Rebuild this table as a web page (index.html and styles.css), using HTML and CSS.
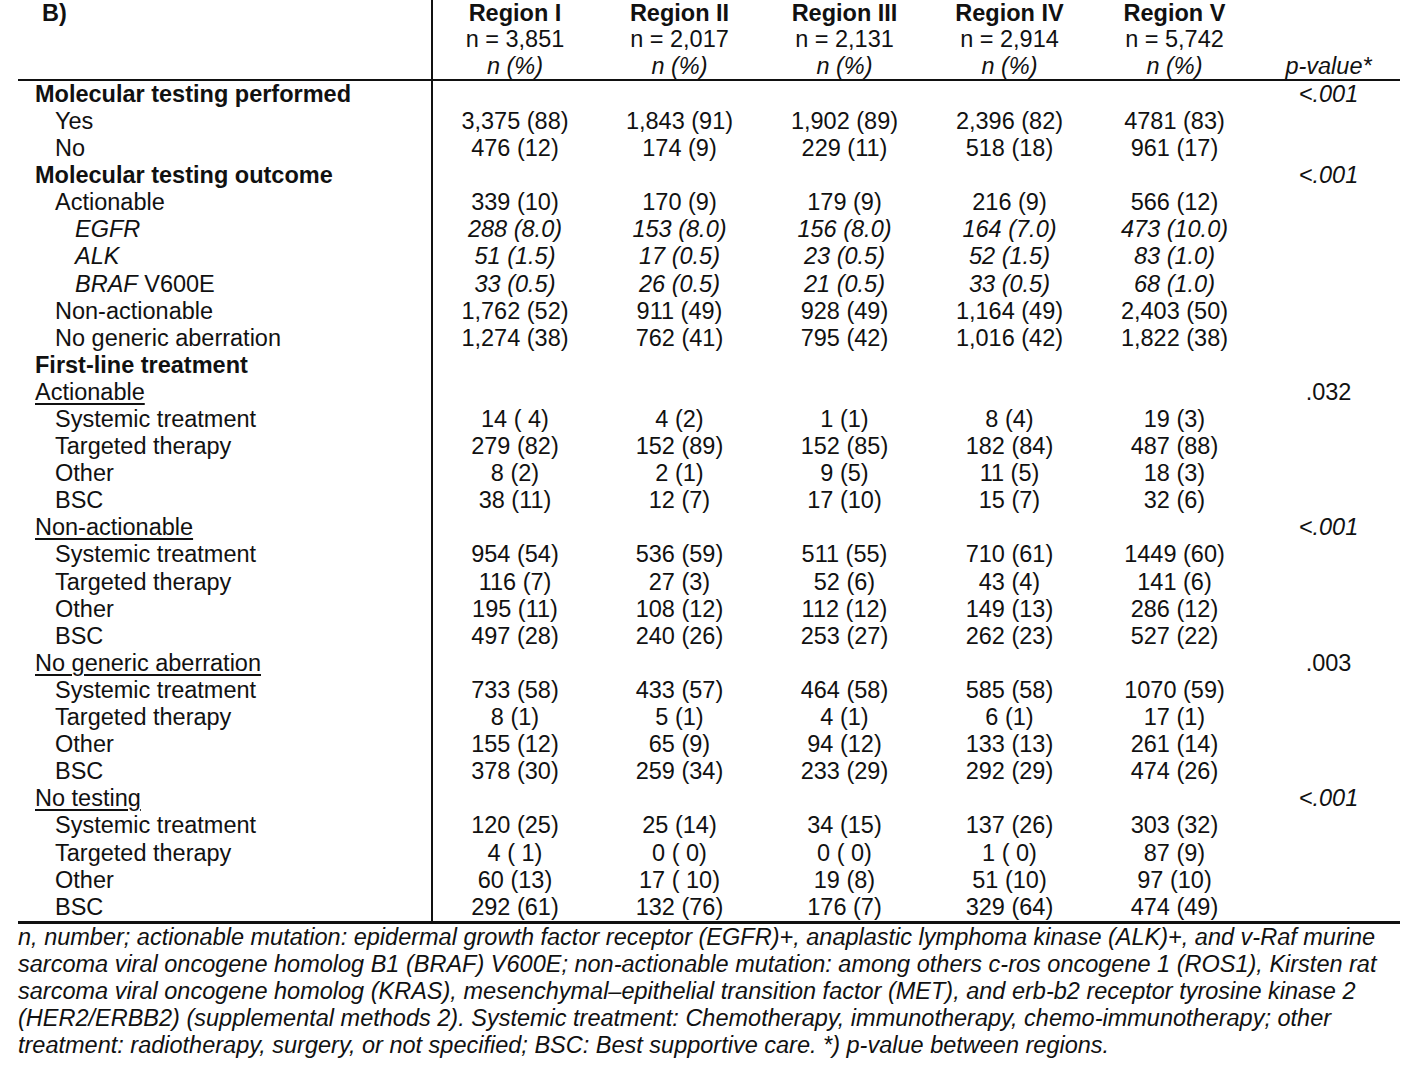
FILE: index.html
```html
<!DOCTYPE html>
<html lang="en">
<head>
<meta charset="utf-8">
<title>Table B</title>
<link rel="stylesheet" href="styles.css">
</head>
<body>
<div class="page">
<table class="tbl">
<colgroup>
<col class="c-label"><col class="c-num"><col class="c-num"><col class="c-num"><col class="c-num"><col class="c-num"><col class="c-p">
</colgroup>
<thead>
<tr class="hrow"><th class="lab hb">B)</th><th class="rg">Region I</th><th class="rg">Region II</th><th class="rg">Region III</th><th class="rg">Region IV</th><th class="rg">Region V</th><th></th></tr>
<tr class="hrow"><th class="lab"></th><th class="nn">n = 3,851</th><th class="nn">n = 2,017</th><th class="nn">n = 2,131</th><th class="nn">n = 2,914</th><th class="nn">n = 5,742</th><th></th></tr>
<tr class="hrow hlast"><th class="lab"></th><th class="it">n (%)</th><th class="it">n (%)</th><th class="it">n (%)</th><th class="it">n (%)</th><th class="it">n (%)</th><th class="it">p-value*</th></tr>
</thead>
<tbody>
<tr><td class="lab l0 b">Molecular testing performed</td><td></td><td></td><td></td><td></td><td></td><td class="p it">&lt;.001</td></tr>
<tr><td class="lab l1">Yes</td><td>3,375 (88)</td><td>1,843 (91)</td><td>1,902 (89)</td><td>2,396 (82)</td><td>4781 (83)</td><td></td></tr>
<tr><td class="lab l1">No</td><td>476 (12)</td><td>174 (9)</td><td>229 (11)</td><td>518 (18)</td><td>961 (17)</td><td></td></tr>
<tr><td class="lab l0 b">Molecular testing outcome</td><td></td><td></td><td></td><td></td><td></td><td class="p it">&lt;.001</td></tr>
<tr><td class="lab l1">Actionable</td><td>339 (10)</td><td>170 (9)</td><td>179 (9)</td><td>216 (9)</td><td>566 (12)</td><td></td></tr>
<tr class="itrow"><td class="lab l2">EGFR</td><td>288 (8.0)</td><td>153 (8.0)</td><td>156 (8.0)</td><td>164 (7.0)</td><td>473 (10.0)</td><td></td></tr>
<tr class="itrow"><td class="lab l2">ALK</td><td>51 (1.5)</td><td>17 (0.5)</td><td>23 (0.5)</td><td>52 (1.5)</td><td>83 (1.0)</td><td></td></tr>
<tr class="itrow"><td class="lab l2">BRAF<span class="up"> V600E</span></td><td>33 (0.5)</td><td>26 (0.5)</td><td>21 (0.5)</td><td>33 (0.5)</td><td>68 (1.0)</td><td></td></tr>
<tr><td class="lab l1">Non-actionable</td><td>1,762 (52)</td><td>911 (49)</td><td>928 (49)</td><td>1,164 (49)</td><td>2,403 (50)</td><td></td></tr>
<tr><td class="lab l1">No generic aberration</td><td>1,274 (38)</td><td>762 (41)</td><td>795 (42)</td><td>1,016 (42)</td><td>1,822 (38)</td><td></td></tr>
<tr><td class="lab l0 b">First-line treatment</td><td></td><td></td><td></td><td></td><td></td><td></td></tr>
<tr><td class="lab l0"><span class="ul">Actionable</span></td><td></td><td></td><td></td><td></td><td></td><td class="p">.032</td></tr>
<tr><td class="lab l1">Systemic treatment</td><td>14 ( 4)</td><td>4 (2)</td><td>1 (1)</td><td>8 (4)</td><td>19 (3)</td><td></td></tr>
<tr><td class="lab l1">Targeted therapy</td><td>279 (82)</td><td>152 (89)</td><td>152 (85)</td><td>182 (84)</td><td>487 (88)</td><td></td></tr>
<tr><td class="lab l1">Other</td><td>8 (2)</td><td>2 (1)</td><td>9 (5)</td><td>11 (5)</td><td>18 (3)</td><td></td></tr>
<tr><td class="lab l1">BSC</td><td>38 (11)</td><td>12 (7)</td><td>17 (10)</td><td>15 (7)</td><td>32 (6)</td><td></td></tr>
<tr><td class="lab l0"><span class="ul">Non-actionable</span></td><td></td><td></td><td></td><td></td><td></td><td class="p it">&lt;.001</td></tr>
<tr><td class="lab l1">Systemic treatment</td><td>954 (54)</td><td>536 (59)</td><td>511 (55)</td><td>710 (61)</td><td>1449 (60)</td><td></td></tr>
<tr><td class="lab l1">Targeted therapy</td><td>116 (7)</td><td>27 (3)</td><td>52 (6)</td><td>43 (4)</td><td>141 (6)</td><td></td></tr>
<tr><td class="lab l1">Other</td><td>195 (11)</td><td>108 (12)</td><td>112 (12)</td><td>149 (13)</td><td>286 (12)</td><td></td></tr>
<tr><td class="lab l1">BSC</td><td>497 (28)</td><td>240 (26)</td><td>253 (27)</td><td>262 (23)</td><td>527 (22)</td><td></td></tr>
<tr><td class="lab l0"><span class="ul">No generic aberration</span></td><td></td><td></td><td></td><td></td><td></td><td class="p">.003</td></tr>
<tr><td class="lab l1">Systemic treatment</td><td>733 (58)</td><td>433 (57)</td><td>464 (58)</td><td>585 (58)</td><td>1070 (59)</td><td></td></tr>
<tr><td class="lab l1">Targeted therapy</td><td>8 (1)</td><td>5 (1)</td><td>4 (1)</td><td>6 (1)</td><td>17 (1)</td><td></td></tr>
<tr><td class="lab l1">Other</td><td>155 (12)</td><td>65 (9)</td><td>94 (12)</td><td>133 (13)</td><td>261 (14)</td><td></td></tr>
<tr><td class="lab l1">BSC</td><td>378 (30)</td><td>259 (34)</td><td>233 (29)</td><td>292 (29)</td><td>474 (26)</td><td></td></tr>
<tr><td class="lab l0"><span class="ul">No testing</span></td><td></td><td></td><td></td><td></td><td></td><td class="p it">&lt;.001</td></tr>
<tr><td class="lab l1">Systemic treatment</td><td>120 (25)</td><td>25 (14)</td><td>34 (15)</td><td>137 (26)</td><td>303 (32)</td><td></td></tr>
<tr><td class="lab l1">Targeted therapy</td><td>4 ( 1)</td><td>0 ( 0)</td><td>0 ( 0)</td><td>1 ( 0)</td><td>87 (9)</td><td></td></tr>
<tr><td class="lab l1">Other</td><td>60 (13)</td><td>17 ( 10)</td><td>19 (8)</td><td>51 (10)</td><td>97 (10)</td><td></td></tr>
<tr class="last"><td class="lab l1">BSC</td><td>292 (61)</td><td>132 (76)</td><td>176 (7)</td><td>329 (64)</td><td>474 (49)</td><td></td></tr>
</tbody>
</table>
<p class="note">n, number; actionable mutation: epidermal growth factor receptor (EGFR)+, anaplastic lymphoma kinase (ALK)+, and v-Raf murine<br>sarcoma viral oncogene homolog B1 (BRAF) V600E; non-actionable mutation: among others c-ros oncogene 1 (ROS1), Kirsten rat<br>sarcoma viral oncogene homolog (KRAS), mesenchymal–epithelial transition factor (MET), and erb-b2 receptor tyrosine kinase 2<br>(HER2/ERBB2) (supplemental methods 2). Systemic treatment: Chemotherapy, immunotherapy, chemo-immunotherapy; other<br>treatment: radiotherapy, surgery, or not specified; BSC: Best supportive care. *) p-value between regions.</p>
</div>
</body>
</html>
```

FILE: styles.css
```css
html, body {
  margin: 0;
  padding: 0;
  background: #ffffff;
}

body {
  font-family: "Liberation Sans", Arial, sans-serif;
  color: #111111;
}

.page {
  padding-left: 18px;
  width: 1382px;
}

.tbl {
  border-collapse: collapse;
  table-layout: fixed;
  width: 1382px;
  font-size: 23.5px;
}

.c-label { width: 414px; }
.c-num { width: 165px; }
.c-p { width: 143px; }

.tbl th,
.tbl td {
  padding: 0;
  height: 27.1px;
  line-height: 27.1px;
  text-align: center;
  white-space: pre;
  font-weight: normal;
  vertical-align: middle;
}

.tbl .hrow th {
  height: 26.3px;
  line-height: 26.3px;
}

.tbl .hlast th {
  border-bottom: 2px solid #111111;
}

.tbl .lab {
  text-align: left;
  border-right: 2px solid #111111;
}

.tbl .hb {
  font-weight: bold;
  padding-left: 24px;
}

.tbl .rg {
  font-weight: bold;
}

.tbl .it,
.tbl .itrow td {
  font-style: italic;
}

.tbl .itrow .up {
  font-style: normal;
}

.tbl .l0 { padding-left: 17px; }
.tbl .l1 { padding-left: 37px; }
.tbl .l2 { padding-left: 57px; }

.tbl .b {
  font-weight: bold;
}

.ul {
  text-decoration: underline;
  text-decoration-thickness: 2px;
  text-underline-offset: 3px;
}

.tbl tr.last td {
  border-bottom: 3px solid #111111;
}

.note {
  margin: 0;
  font-style: italic;
  font-size: 23.5px;
  line-height: 27px;
  white-space: nowrap;
}
```
